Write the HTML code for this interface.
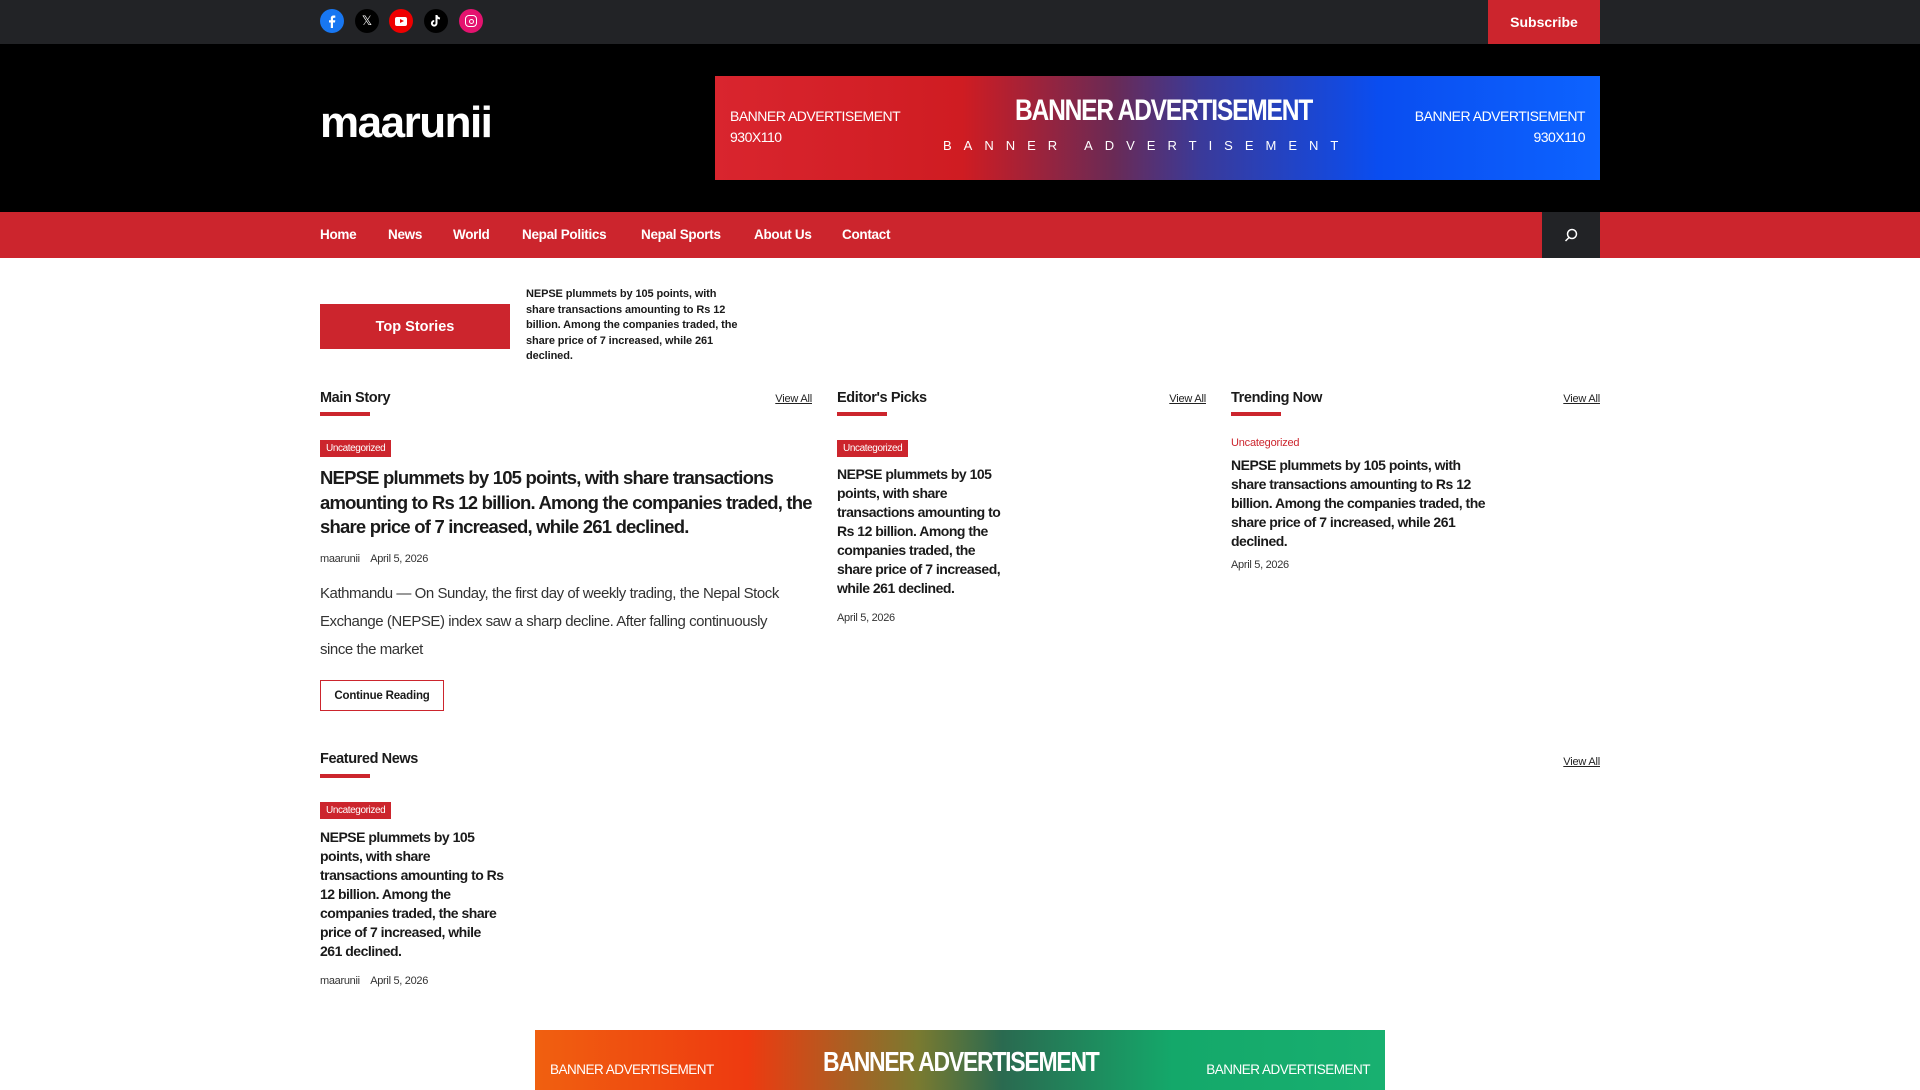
<!DOCTYPE html>
<html><head><meta charset="utf-8"><style>
*{margin:0;padding:0;box-sizing:border-box}
body{width:1920px;height:1080px;overflow:hidden;background:#fff;font-family:"Liberation Sans",sans-serif;color:#1a1a1a;position:relative}
.a{position:absolute}
.top{left:0;top:0;width:1920px;height:44px;background:#222326}
.ic{width:24px;height:24px;border-radius:50%;top:9px;display:flex;align-items:center;justify-content:center}
.sub{left:1488px;top:0;width:112px;height:44px;background:#cc252d;color:#fff;font-weight:bold;font-size:14px;display:flex;align-items:center;justify-content:center}
.hdr{left:0;top:44px;width:1920px;height:168px;background:#000}
.logo{left:320px;top:98px;color:#fff;font-weight:bold;font-size:44px;letter-spacing:-1.5px}
.ban{overflow:hidden;color:#fff}
.nav{left:0;top:212px;width:1920px;height:46px;background:#cc252d}
.nav span{position:absolute;top:15px;color:#fff;font-weight:bold;font-size:13.5px;letter-spacing:-.3px}
.srch{left:1542px;top:212px;width:58px;height:46px;background:#222326}
.h{font-weight:bold;font-size:14.5px;letter-spacing:-.4px}
.ul{height:4px;width:50px;background:#cc252d}
.va{font-size:11px;text-decoration:underline;color:#222;letter-spacing:-.2px;text-align:right;width:60px}
.tag{background:#cc252d;color:#fff;font-size:10px;padding:3px 6px;letter-spacing:-.4px}
.meta{font-size:11px;color:#333;letter-spacing:-.3px}
.t{font-weight:bold;letter-spacing:-.5px;color:#1a1a1a}
</style></head><body>
<div class="a top"></div>
<div class="a ic" style="left:320px;background:#1877f2"><svg width="14" height="14" viewBox="0 0 14 14"><path d="M8 14V8.5h2l.3-2.3H8V4.8c0-.7.2-1.1 1.1-1.1h1.2V1.6C10 1.5 9.3 1.5 8.6 1.5 7 1.5 5.8 2.4 5.8 4.3v1.9H4v2.3h1.8V14" fill="#fff"/></svg></div>
<div class="a ic" style="left:355px;background:#000;color:#fff;font-size:13px">𝕏</div>
<div class="a ic" style="left:389px;background:#e00"><div style="width:12px;height:9px;background:#fff;border-radius:2px;position:relative"><div style="position:absolute;left:5px;top:2px;border-left:4px solid #e00;border-top:2.5px solid transparent;border-bottom:2.5px solid transparent"></div></div></div>
<div class="a ic" style="left:424px;background:#000"><svg width="14" height="14" viewBox="0 0 14 14"><path d="M7.5 1v8.3a2.3 2.3 0 1 1-2.3-2.3" stroke="#fff" stroke-width="2" fill="none"/><path d="M7.5 1.5c.4 1.8 1.6 2.8 3.5 3" stroke="#fff" stroke-width="2" fill="none"/></svg></div>
<div class="a ic" style="left:459px;background:#e4136f"><div style="width:12px;height:12px;border:1.6px solid #fff;border-radius:4px;display:flex;align-items:center;justify-content:center"><div style="width:5px;height:5px;border:1.4px solid #fff;border-radius:50%"></div></div></div>
<div class="a sub">Subscribe</div>
<div class="a hdr"></div>
<div class="a logo">maarunii</div>
<div class="a ban" style="left:715px;top:76px;width:885px;height:104px;background:linear-gradient(90deg,#d9252e 0%,#cf1c22 28%,#6a2a55 45%,#3a3a9a 55%,#0a4df0 75%,#0d63ff 100%)">
<div class="a" style="left:15px;top:32px;font-size:14px;letter-spacing:-.5px">BANNER ADVERTISEMENT<br><span style="line-height:26px">930X110</span></div>
<div class="a" style="left:300px;top:18px;font-size:30px;font-weight:bold;letter-spacing:-1.5px;transform:scaleX(.82);transform-origin:left">BANNER ADVERTISEMENT</div>
<div class="a" style="left:228px;top:62px;font-size:13px;letter-spacing:12px">BANNER ADVERTISEMENT</div>
<div class="a" style="right:15px;top:32px;font-size:14px;letter-spacing:-.5px;text-align:right">BANNER ADVERTISEMENT<br><span style="line-height:26px">930X110</span></div>
</div>
<div class="a nav"><span style="left:320px">Home</span><span style="left:388px">News</span><span style="left:453px">World</span><span style="left:522px">Nepal Politics</span><span style="left:641px">Nepal Sports</span><span style="left:754px">About Us</span><span style="left:842px">Contact</span></div>
<div class="a srch"><svg class="a" style="left:22px;top:16px" width="14" height="14" viewBox="0 0 14 14"><circle cx="8" cy="6" r="4.5" stroke="#fff" stroke-width="1.5" fill="none"/><path d="M5 9.5L1.5 13" stroke="#fff" stroke-width="1.5"/></svg></div>

<div class="a" style="left:320px;top:304px;width:190px;height:45px;background:#cc252d;color:#fff;font-weight:bold;font-size:14.5px;display:flex;align-items:center;justify-content:center">Top Stories</div>
<div class="a t" style="left:526px;top:287px;width:212px;font-size:11px;line-height:15.5px;letter-spacing:-.1px">NEPSE plummets by 105 points, with share transactions amounting to Rs 12 billion. Among the companies traded, the share price of 7 increased, while 261 declined.</div>

<div class="a h" style="left:320px;top:390px">Main Story</div><div class="a ul" style="left:320px;top:412px;width:50px"></div><div class="a va" style="left:752px;top:393px">View All</div>
<div class="a h" style="left:837px;top:390px">Editor's Picks</div><div class="a ul" style="left:837px;top:412px;width:50px"></div><div class="a va" style="left:1146px;top:393px">View All</div>
<div class="a h" style="left:1231px;top:390px">Trending Now</div><div class="a ul" style="left:1231px;top:412px;width:50px"></div><div class="a va" style="left:1540px;top:393px">View All</div>

<div class="a tag" style="left:320px;top:440px">Uncategorized</div>
<div class="a t" style="left:320px;top:466px;width:495px;font-size:18.5px;line-height:24.5px;letter-spacing:-.8px">NEPSE plummets by 105 points, with share transactions amounting to Rs 12 billion. Among the companies traded, the share price of 7 increased, while 261 declined.</div>
<div class="a meta" style="left:320px;top:553px">maarunii &nbsp;&nbsp; April 5, 2026</div>
<div class="a" style="left:320px;top:580px;width:470px;font-size:15px;line-height:28px;color:#333;letter-spacing:-.45px">Kathmandu — On Sunday, the first day of weekly trading, the Nepal Stock Exchange (NEPSE) index saw a sharp decline. After falling continuously since the market</div>
<div class="a" style="left:320px;top:680px;width:124px;height:31px;border:1.5px solid #cc252d;font-size:11.5px;font-weight:bold;display:flex;align-items:center;justify-content:center;letter-spacing:-.2px">Continue Reading</div>

<div class="a tag" style="left:837px;top:440px">Uncategorized</div>
<div class="a t" style="left:837px;top:465px;width:175px;font-size:14px;line-height:19px">NEPSE plummets by 105 points, with share transactions amounting to Rs 12 billion. Among the companies traded, the share price of 7 increased, while 261 declined.</div>
<div class="a meta" style="left:837px;top:612px">April 5, 2026</div>

<div class="a" style="left:1231px;top:437px;font-size:11px;color:#cc252d;letter-spacing:-.2px">Uncategorized</div>
<div class="a t" style="left:1231px;top:456px;width:262px;font-size:14px;line-height:19px">NEPSE plummets by 105 points, with share transactions amounting to Rs 12 billion. Among the companies traded, the share price of 7 increased, while 261 declined.</div>
<div class="a meta" style="left:1231px;top:559px">April 5, 2026</div>

<div class="a h" style="left:320px;top:751px">Featured News</div><div class="a ul" style="left:320px;top:774px;width:50px"></div><div class="a va" style="left:1540px;top:756px">View All</div>
<div class="a tag" style="left:320px;top:802px">Uncategorized</div>
<div class="a t" style="left:320px;top:828px;width:185px;font-size:14px;line-height:19px">NEPSE plummets by 105 points, with share transactions amounting to Rs 12 billion. Among the companies traded, the share price of 7 increased, while 261 declined.</div>
<div class="a meta" style="left:320px;top:975px">maarunii &nbsp;&nbsp; April 5, 2026</div>

<div class="a ban" style="left:535px;top:1030px;width:850px;height:60px;background:linear-gradient(90deg,#f06010 0%,#ee3a10 25%,#7a7a30 45%,#2a6a50 55%,#14a86a 75%,#18b070 100%)">
<div class="a" style="left:15px;top:32px;font-size:13.5px;letter-spacing:-.5px">BANNER ADVERTISEMENT</div>
<div class="a" style="left:288px;top:16px;font-size:28px;font-weight:bold;letter-spacing:-1.5px;transform:scaleX(.82);transform-origin:left">BANNER ADVERTISEMENT</div>
<div class="a" style="right:15px;top:32px;font-size:13.5px;letter-spacing:-.5px">BANNER ADVERTISEMENT</div>
</div>
</body></html>
